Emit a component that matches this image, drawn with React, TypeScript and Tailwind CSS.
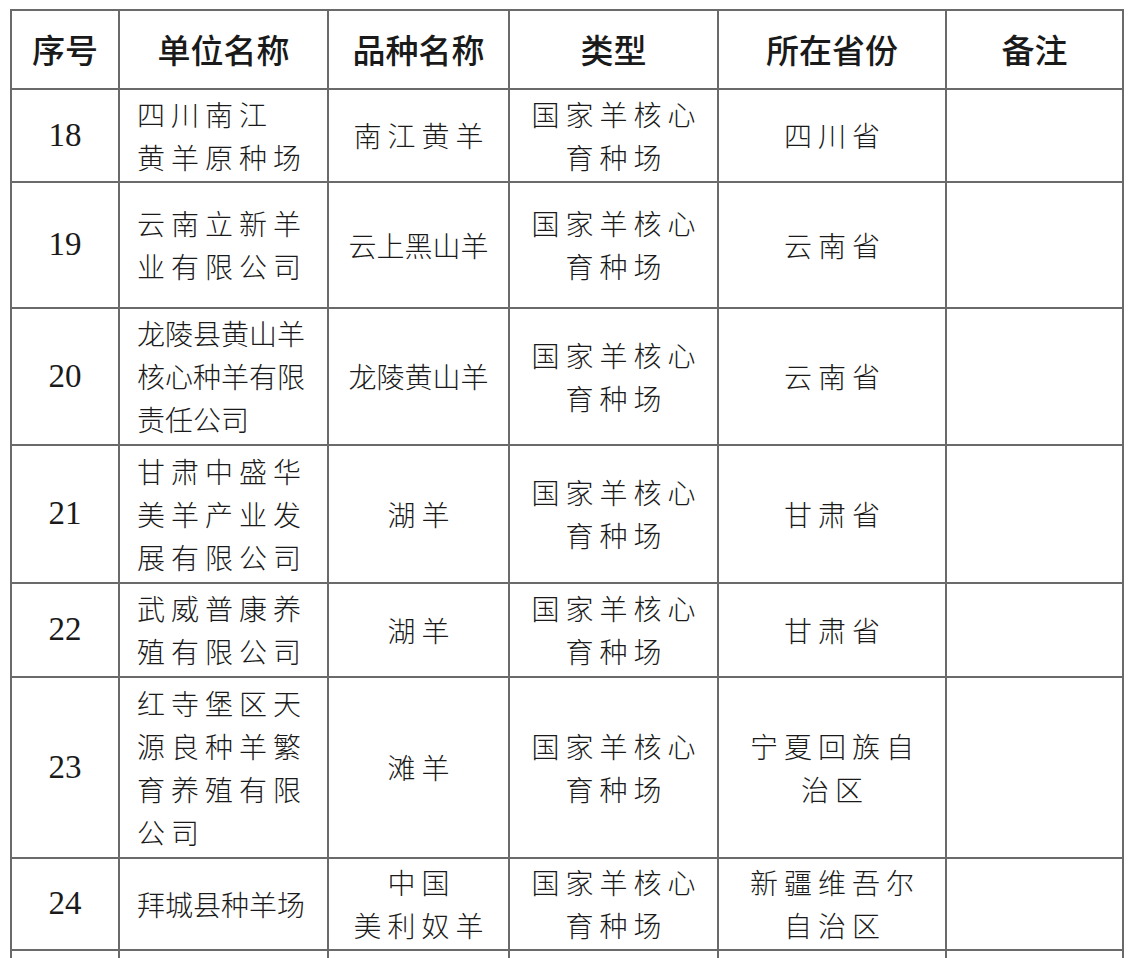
import React from "react";

type Cell = { lines: string[]; tight?: boolean };

type Row = {
  no: string;
  h: string;
  unit: Cell;
  breed: Cell;
  kind: Cell;
  prov: Cell;
};

const KIND: Cell = { lines: ["国家羊核心", "育种场"] };

const rows: Row[] = [
  {
    no: "18",
    h: "h-[93px]",
    unit: { lines: ["四川南江", "黄羊原种场"] },
    breed: { lines: ["南江黄羊"] },
    kind: KIND,
    prov: { lines: ["四川省"] },
  },
  {
    no: "19",
    h: "h-[126px]",
    unit: { lines: ["云南立新羊", "业有限公司"] },
    breed: { lines: ["云上黑山羊"], tight: true },
    kind: KIND,
    prov: { lines: ["云南省"] },
  },
  {
    no: "20",
    h: "h-[137px]",
    unit: { lines: ["龙陵县黄山羊", "核心种羊有限", "责任公司"], tight: true },
    breed: { lines: ["龙陵黄山羊"], tight: true },
    kind: KIND,
    prov: { lines: ["云南省"] },
  },
  {
    no: "21",
    h: "h-[138px]",
    unit: { lines: ["甘肃中盛华", "美羊产业发", "展有限公司"] },
    breed: { lines: ["湖羊"] },
    kind: KIND,
    prov: { lines: ["甘肃省"] },
  },
  {
    no: "22",
    h: "h-[94px]",
    unit: { lines: ["武威普康养", "殖有限公司"] },
    breed: { lines: ["湖羊"] },
    kind: KIND,
    prov: { lines: ["甘肃省"] },
  },
  {
    no: "23",
    h: "h-[181px]",
    unit: { lines: ["红寺堡区天", "源良种羊繁", "育养殖有限", "公司"] },
    breed: { lines: ["滩羊"] },
    kind: KIND,
    prov: { lines: ["宁夏回族自", "治区"] },
  },
  {
    no: "24",
    h: "h-[92px]",
    unit: { lines: ["拜城县种羊场"], tight: true },
    breed: { lines: ["中国", "美利奴羊"] },
    kind: KIND,
    prov: { lines: ["新疆维吾尔", "自治区"] },
  },
];

const border = "border-2 border-[#6a6a6a]";
const song = "font-['Noto_Sans_CJK_SC',sans-serif] font-light text-[28px] leading-[43px] text-[#1a1a1a]";

function Lines({ cell }: { cell: Cell }) {
  return (
    <>
      {cell.lines.map((l, i) => (
        <div key={i}>
          {cell.tight ? (
            <span>{l}</span>
          ) : (
            <span className="inline-block tracking-[6px] mr-[-6px]">{l}</span>
          )}
        </div>
      ))}
    </>
  );
}

export default function App() {
  return (
    <div className="h-[958px] overflow-hidden bg-white pt-[9px] pl-[10px]">
      <table className="table-fixed border-collapse w-[1114px]">
        <colgroup>
          <col className="w-[108px]" />
          <col className="w-[209px]" />
          <col className="w-[181px]" />
          <col className="w-[209px]" />
          <col className="w-[228px]" />
          <col className="w-[177px]" />
        </colgroup>
        <thead>
          <tr className="h-[79px] font-['Noto_Sans_CJK_SC',sans-serif] text-[33px] text-[#1a1a1a]">
            <th className={`${border} font-medium`}>序号</th>
            <th className={`${border} font-medium`}>单位名称</th>
            <th className={`${border} font-medium`}>品种名称</th>
            <th className={`${border} font-medium`}>类型</th>
            <th className={`${border} font-medium`}>所在省份</th>
            <th className={`${border} font-medium`}>备注</th>
          </tr>
        </thead>
        <tbody>
          {rows.map((r) => (
            <tr key={r.no} className={r.h}>
              <td className={`${border} text-center font-['Liberation_Serif',serif] text-[33px] text-[#1a1a1a]`}>
                {r.no}
              </td>
              <td className={`${border} ${song} text-left pl-[17px]`}>
                <Lines cell={r.unit} />
              </td>
              <td className={`${border} ${song} text-center`}>
                <Lines cell={r.breed} />
              </td>
              <td className={`${border} ${song} text-center`}>
                <Lines cell={r.kind} />
              </td>
              <td className={`${border} ${song} text-center`}>
                <Lines cell={r.prov} />
              </td>
              <td className={border}></td>
            </tr>
          ))}
          <tr className="h-[60px]">
            <td className={border}></td>
            <td className={border}></td>
            <td className={border}></td>
            <td className={border}></td>
            <td className={border}></td>
            <td className={border}></td>
          </tr>
        </tbody>
      </table>
    </div>
  );
}
